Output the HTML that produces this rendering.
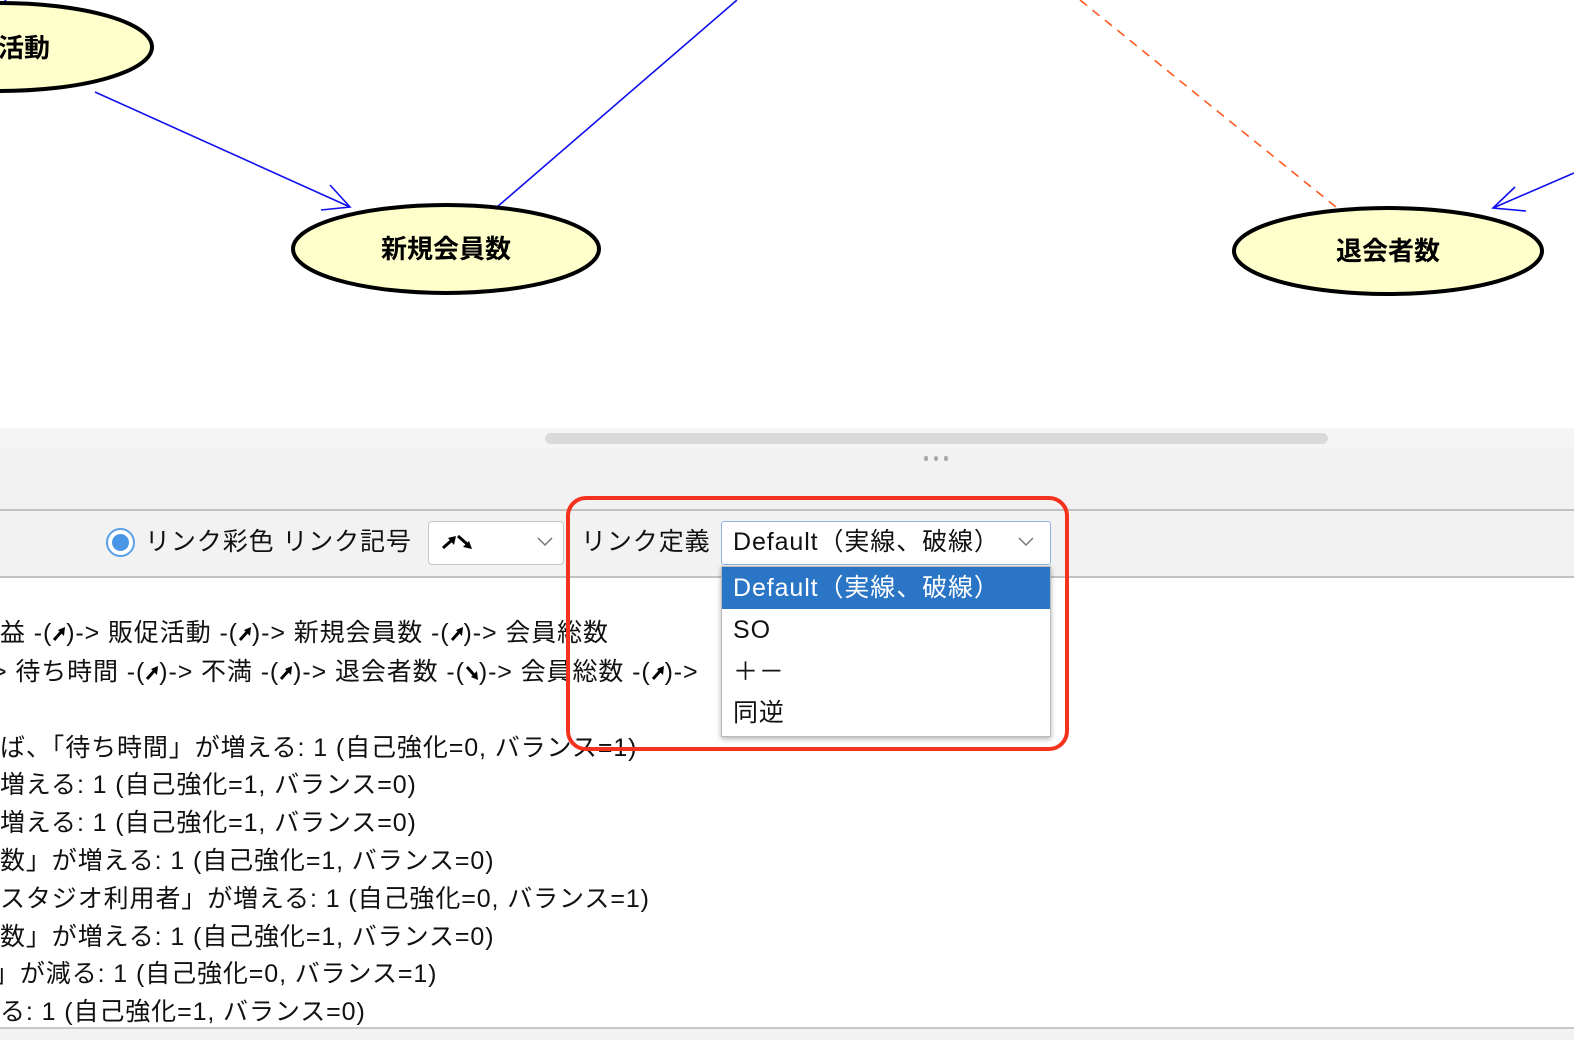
<!DOCTYPE html>
<html><head><meta charset="utf-8"><style>
*{margin:0;padding:0;box-sizing:border-box}
body{width:1574px;height:1040px;overflow:hidden;background:#fff;position:relative;font-family:"Liberation Sans","Noto Sans CJK JP",sans-serif;color:#111}
.abs{position:absolute}
.t{position:absolute;font-size:25px;white-space:nowrap;line-height:30px;letter-spacing:0.9px}
.u,.d{display:inline-block;width:14px;height:18px;vertical-align:-2px}
</style></head><body>
<svg width="0" height="0" style="position:absolute">
<defs>
<symbol id="up" viewBox="0 0 14 18"><line x1="2" y1="15" x2="10" y2="6" stroke="#000" stroke-width="3"/><polygon points="13,2 12,11 6,5" fill="#000"/></symbol>
<symbol id="dn" viewBox="0 0 14 18"><line x1="2" y1="3" x2="10" y2="12" stroke="#000" stroke-width="3"/><polygon points="13,16 12,7 6,13" fill="#000"/></symbol>
</defs></svg>
<svg class="abs" style="left:0;top:0" width="1574" height="430">
<g stroke="#1010ee" stroke-width="1.6" fill="none">
<line x1="95" y1="92" x2="350" y2="207"/>
<polyline points="330,185 350,207 321,210"/>
<line x1="497" y1="207" x2="737" y2="0"/>
<line x1="1574" y1="173" x2="1493" y2="208"/>
<polyline points="1515,187 1493,208 1526,211"/>
<line x1="0" y1="6" x2="6" y2="0"/>
</g>
<line x1="1080" y1="0" x2="1336" y2="207" stroke="#ff5a1e" stroke-width="1.6" stroke-dasharray="9,7"/>
<g fill="#ffffcc" stroke="#000" stroke-width="4">
<ellipse cx="0" cy="47" rx="152" ry="44"/>
<ellipse cx="446" cy="249" rx="153" ry="44"/>
<ellipse cx="1388" cy="251" rx="154" ry="43"/>
</g>
<g font-family="Liberation Sans,Noto Sans CJK JP,sans-serif" font-weight="bold" font-size="26" fill="#000">
<text x="-2" y="57">活動</text>
<text x="446" y="258" text-anchor="middle">新規会員数</text>
<text x="1388" y="260" text-anchor="middle">退会者数</text>
</g>
</svg>
<div class="abs" style="left:0;top:428px;width:1574px;height:150px;background:#f2f2f2"></div>
<div class="abs" style="left:0;top:428px;width:1574px;height:20px;background:#f5f5f5"></div>
<div class="abs" style="left:545px;top:433px;width:783px;height:11px;background:#dadada;border-radius:6px"></div>
<div class="abs" style="left:924px;top:456px;width:4px;height:5px;background:#aaa;border-radius:2px"></div>
<div class="abs" style="left:934px;top:456px;width:4px;height:5px;background:#aaa;border-radius:2px"></div>
<div class="abs" style="left:944px;top:456px;width:4px;height:5px;background:#aaa;border-radius:2px"></div>
<div class="abs" style="left:0;top:509px;width:1574px;height:2px;background:#c2c2c2"></div>
<div class="abs" style="left:0;top:576px;width:1574px;height:2px;background:#c2c2c2"></div>
<div class="abs" style="left:106px;top:528px;width:29px;height:29px;border:2px solid #5aa0e8;border-radius:50%;background:#fff"></div>
<div class="abs" style="left:112px;top:534px;width:17px;height:17px;border-radius:50%;background:#4a96e6"></div>
<div class="t" style="left:145px;top:527px">リンク彩色&nbsp;リンク記号</div>
<div class="abs" style="left:428px;top:521px;width:136px;height:44px;background:#fff;border:1px solid #c6c6c6;border-radius:4px"></div>
<svg class="abs" style="left:441px;top:532px" width="40" height="20"><line x1="2" y1="16" x2="11" y2="8" stroke="#000" stroke-width="3"/><polygon points="15,4 13,13 7,6" fill="#000"/><line x1="17" y1="4" x2="26" y2="12" stroke="#000" stroke-width="3"/><polygon points="31,17 22,15 28,9" fill="#000"/></svg>
<svg class="abs" style="left:536px;top:535px" width="20" height="14"><polyline points="2,3 9,10 16,3" fill="none" stroke="#777" stroke-width="1.5"/></svg>
<div class="t" style="left:581px;top:527px">リンク定義</div>
<div class="abs" style="left:721px;top:521px;width:330px;height:44px;background:#fff;border:1.5px solid #8fb4e0;border-radius:3px"></div>
<div class="t" style="left:733px;top:527px">Default（実線、破線）</div>
<svg class="abs" style="left:1017px;top:535px" width="20" height="14"><polyline points="2,3 9,10 16,3" fill="none" stroke="#777" stroke-width="1.5"/></svg>
<div class="abs" style="left:0;top:578px;width:1574px;height:450px;background:#fff"></div>
<div class="t" style="left:0;top:618px">益 -(<svg class="u"><use href="#up"/></svg>)-&gt; 販促活動 -(<svg class="u"><use href="#up"/></svg>)-&gt; 新規会員数 -(<svg class="u"><use href="#up"/></svg>)-&gt; 会員総数</div>
<div class="t" style="left:-8px;top:657px">&gt; 待ち時間 -(<svg class="u"><use href="#up"/></svg>)-&gt; 不満 -(<svg class="u"><use href="#up"/></svg>)-&gt; 退会者数 -(<svg class="d"><use href="#dn"/></svg>)-&gt; 会員総数 -(<svg class="u"><use href="#up"/></svg>)-&gt;</div>
<div class="t" style="left:0;top:733px">ば、「待ち時間」が増える: 1 (自己強化=0, バランス=1)</div>
<div class="t" style="left:0;top:770px">増える: 1 (自己強化=1, バランス=0)</div>
<div class="t" style="left:0;top:808px">増える: 1 (自己強化=1, バランス=0)</div>
<div class="t" style="left:0;top:846px">数」が増える: 1 (自己強化=1, バランス=0)</div>
<div class="t" style="left:0;top:884px">スタジオ利用者」が増える: 1 (自己強化=0, バランス=1)</div>
<div class="t" style="left:0;top:922px">数」が増える: 1 (自己強化=1, バランス=0)</div>
<div class="t" style="left:-6px;top:959px">」が減る: 1 (自己強化=0, バランス=1)</div>
<div class="t" style="left:0;top:997px">る: 1 (自己強化=1, バランス=0)</div>
<div class="abs" style="left:0;top:1027px;width:1574px;height:2px;background:#c8c8c8"></div>
<div class="abs" style="left:0;top:1029px;width:1574px;height:11px;background:#f2f2f2"></div>
<div class="abs" style="left:721px;top:566px;width:330px;height:171px;background:#fff;border:1px solid #bbb;box-shadow:0 2px 5px rgba(0,0,0,.3)"></div>
<div class="abs" style="left:722px;top:567px;width:328px;height:42px;background:#2a75c6"></div>
<div class="t" style="left:733px;top:573px;color:#fff">Default（実線、破線）</div>
<div class="t" style="left:733px;top:615px">SO</div>
<div class="t" style="left:733px;top:657px">＋－</div>
<div class="t" style="left:733px;top:698px">同逆</div>
<div class="abs" style="left:566px;top:496px;width:503px;height:255px;border:4px solid #f5321e;border-radius:20px"></div>
</body></html>
